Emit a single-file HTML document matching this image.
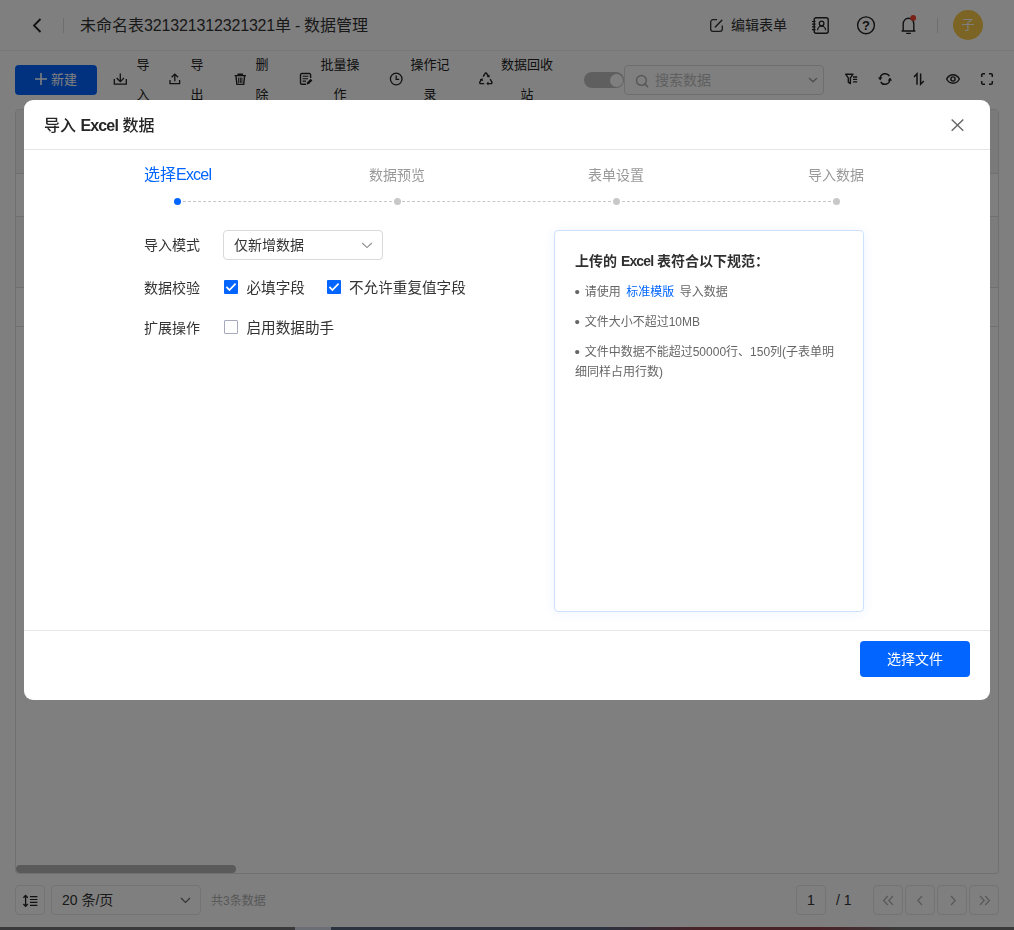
<!DOCTYPE html>
<html lang="zh-CN">
<head>
<meta charset="utf-8">
<title>数据管理</title>
<style>
*{box-sizing:border-box;margin:0;padding:0}
html,body{width:1014px;height:930px;overflow:hidden;background:#fff}
body{font-family:"Liberation Sans","Noto Sans CJK SC",sans-serif;font-size:14px;color:#333;position:relative}
.abs{position:absolute}
svg{display:block}
#page{position:absolute;left:0;top:0;width:1014px;height:930px;background:#fff}
#topbar{position:absolute;left:0;top:0;width:1014px;height:51px;border-bottom:1px solid #efefef}
#title{position:absolute;left:80px;top:0;height:51px;line-height:51px;font-size:16px;color:#333;white-space:nowrap;word-spacing:-0.6px}
.vdiv{position:absolute;width:1px;background:#ddd}
.tb{position:absolute;top:50px;height:60px;text-align:center;line-height:30px;font-size:13px;color:#222}
.tb span{display:block}
#newbtn{position:absolute;left:15px;top:65px;width:82px;height:30px;border-radius:4px;background:#0265ff;color:#fff;font-size:14px;line-height:30px;white-space:nowrap}
#table{position:absolute;left:15px;top:109px;width:984px;height:765px;border:1px solid #e0e0e0;border-radius:4px;overflow:hidden;background:#fff}
.row{position:absolute;left:0;width:984px;border-bottom:1px solid #e0e0e0}
#overlay{position:absolute;left:0;top:0;width:1014px;height:927px;background:rgba(0,0,0,.5)}
#strip{position:absolute;left:0;top:927px;width:1014px;height:3px;background:linear-gradient(to right,#3a3a3c 0,#3a3a3c 295px,#6b6f75 295px,#6b6f75 331px,#2b3340 331px,#2b3340 600px,#4a2328 700px,#4a2328 820px,#3a3a3a 900px,#3a3a3a 1014px)}
#modal{position:absolute;left:24px;top:100px;width:966px;height:600px;background:#fff;border-radius:9px;will-change:transform}
#mhead{position:absolute;left:0;top:0;width:966px;height:50px;border-bottom:1px solid #e6e6e6}
#mtitle{position:absolute;left:20px;top:0;line-height:51px;font-size:16px;font-weight:500;color:#262626;white-space:nowrap}
.step{position:absolute;top:64px;height:22px;line-height:22px;font-size:14px;color:#999;white-space:nowrap}
.dot{position:absolute;top:98px;width:7px;height:7px;border-radius:50%;background:#c8c8c8}
.lab{position:absolute;left:120px;font-size:14px;color:#333;line-height:20px;white-space:nowrap}
.cb{position:absolute;width:14px;height:14px;border-radius:1px}
.cb.on{background:#0265ff}
.cb.off{border:1.2px solid #a6aabb;background:#fff}
.cbl{position:absolute;font-size:14.6px;color:#333;line-height:20px;white-space:nowrap}
#panel{position:absolute;left:530px;top:130px;width:310px;height:382px;border:1px solid #cce0ff;border-radius:4px;box-shadow:0 1px 12px rgba(2,101,255,.07)}
#panel p{position:absolute;left:20px;font-size:12px;color:#666;line-height:20px;width:270px}
#panel p i{display:inline-block;width:9.7px;font-style:normal;font-size:15.5px;line-height:0;vertical-align:-1px;text-indent:-0.5px}
#mfoot{position:absolute;left:0;top:530px;width:966px;height:70px;border-top:1px solid #e6e6e6}
#okbtn{position:absolute;left:836px;top:541px;width:110px;height:36px;border-radius:4px;background:#0265ff;color:#fff;text-align:center;line-height:36px;font-size:14px}
.pgb{position:absolute;top:885px;height:30px;border:1px solid #e6e6e6;border-radius:4px;background:#fff}
</style>
</head>
<body>
<div id="page">
  <div id="topbar">
    <svg class="abs" style="left:30px;top:17px" width="14" height="17" viewBox="0 0 14 17"><path d="M10.5 2 L4 8.5 L10.5 15" fill="none" stroke="#222" stroke-width="1.8"/></svg>
    <div class="vdiv" style="left:63px;top:18px;height:15px"></div>
    <div id="title">未命名表<span style="letter-spacing:-0.16px">321321312321321</span>单 - 数据管理</div>
    <div class="abs" style="left:731px;top:0;line-height:51px;font-size:14px;color:#333;white-space:nowrap">编辑表单</div>

    <svg class="abs" style="left:709px;top:18px" width="16" height="15" viewBox="0 0 16 15"><path d="M8 1.7 H4 a2.3 2.3 0 0 0 -2.3 2.3 V11 a2.3 2.3 0 0 0 2.3 2.3 H11 a2.3 2.3 0 0 0 2.3 -2.3 V7.5" fill="none" stroke="#333" stroke-width="1.3"/><path d="M6.3 9 L12.8 2.3" fill="none" stroke="#333" stroke-width="1.5" stroke-linecap="round"/></svg>
    <svg class="abs" style="left:811px;top:16px" width="19" height="19" viewBox="0 0 19 19"><rect x="3.2" y="1.7" width="14" height="15.6" rx="2" fill="none" stroke="#222" stroke-width="1.4"/><path d="M1 5.5 H4.6 M1 8.2 H4.6 M1 10.9 H4.6 M1 13.6 H4.6" stroke="#222" stroke-width="1.2"/><circle cx="10.6" cy="7.4" r="2.3" fill="none" stroke="#222" stroke-width="1.3"/><path d="M6.6 14.2 a4 4 0 0 1 8 0" fill="none" stroke="#222" stroke-width="1.3"/></svg>
    <svg class="abs" style="left:856px;top:15px" width="20" height="20" viewBox="0 0 20 20"><circle cx="10" cy="10.3" r="8.4" fill="none" stroke="#222" stroke-width="1.4"/><text x="10" y="15" text-anchor="middle" font-family="Liberation Sans, sans-serif" font-size="13" font-weight="bold" fill="#222">?</text></svg>
    <svg class="abs" style="left:898px;top:13px" width="22" height="23" viewBox="0 0 22 23"><path d="M3.6 18 H17.4 M5.2 18 V11 a5.3 5.8 0 0 1 10.6 0 V18" fill="none" stroke="#222" stroke-width="1.4" stroke-linejoin="round"/><path d="M8.6 20.3 H12.4" stroke="#222" stroke-width="1.3" stroke-linecap="round"/><circle cx="15.2" cy="5" r="2.9" fill="#f5452e"/></svg>
    <div class="vdiv" style="left:937px;top:18px;height:15px"></div>
    <div class="abs" style="left:953px;top:10px;width:30px;height:30px;border-radius:50%;background:#f8c848;color:#fff;font-size:13px;line-height:30px;text-align:center">子</div>
  </div>
  <div id="newbtn"><svg class="abs" style="left:19px;top:7px" width="14" height="14" viewBox="0 0 14 14"><path d="M7 1 V13 M1 7 H13" stroke="#fff" stroke-width="1.6"/></svg><span class="abs" style="left:36px;top:0;font-size:13px">新建</span></div>
  <div class="tb" style="left:133px;width:20px"><span>导</span><span>入</span></div>
  <div class="tb" style="left:187px;width:20px"><span>导</span><span>出</span></div>
  <div class="tb" style="left:252px;width:20px"><span>删</span><span>除</span></div>
  <div class="tb" style="left:315px;width:50px"><span>批量操</span><span>作</span></div>
  <div class="tb" style="left:405px;width:50px"><span>操作记</span><span>录</span></div>
  <div class="tb" style="left:495px;width:64px"><span>数据回收</span><span>站</span></div>

  <svg class="abs" style="left:112px;top:72px" width="16" height="14" viewBox="0 0 16 14"><path d="M2.3 7 V12.2 H14.3 V7" fill="none" stroke="#222" stroke-width="1.3"/><path d="M8.3 1.6 V9.6 M4.6 6 L8.3 9.7 L12 6" fill="none" stroke="#222" stroke-width="1.3"/></svg>
  <svg class="abs" style="left:168px;top:72px" width="14" height="14" viewBox="0 0 14 14"><path d="M2 8 V11.6 H11.6 V8" fill="none" stroke="#222" stroke-width="1.3"/><path d="M6.8 9.2 V2.4 M3.6 5.3 L6.8 2.1 L10 5.3" fill="none" stroke="#222" stroke-width="1.3"/></svg>
  <svg class="abs" style="left:233px;top:72px" width="14" height="14" viewBox="0 0 14 14"><path d="M1.6 3.6 H13 M5.2 3.4 V2.2 H9.4 V3.4" fill="none" stroke="#222" stroke-width="1.4"/><path d="M3 4.2 L3.9 12.4 H10.7 L11.6 4.2" fill="none" stroke="#222" stroke-width="1.4" stroke-linejoin="round"/><path d="M5.7 5.5 V11 M7.3 5.5 V11 M8.9 5.5 V11" stroke="#222" stroke-width="1"/></svg>
  <svg class="abs" style="left:298px;top:71px" width="16" height="16" viewBox="0 0 16 16"><path d="M12.6 7 V3.8 a1.3 1.3 0 0 0 -1.3 -1.3 H3.8 a1.3 1.3 0 0 0 -1.3 1.3 V12 a1.3 1.3 0 0 0 1.3 1.3 H8" fill="none" stroke="#222" stroke-width="1.4"/><path d="M4.6 5.3 H10.4 M4.6 7.7 H10 M4.6 10.1 H8" stroke="#222" stroke-width="1.1"/><path d="M8.6 13.6 L9.2 11.2 L12.6 7.8 L14.4 9.6 L11 13 Z" fill="#222"/></svg>
  <svg class="abs" style="left:388px;top:71px" width="16" height="16" viewBox="0 0 16 16"><circle cx="8.2" cy="8" r="5.8" fill="none" stroke="#222" stroke-width="1.3"/><path d="M8.2 4.6 V8.4 H11.2" fill="none" stroke="#222" stroke-width="1.3"/></svg>
  <svg class="abs" style="left:477px;top:71px" width="18" height="16" viewBox="0 0 18 16"><g fill="none" stroke="#222" stroke-width="1.4" stroke-linejoin="round"><path d="M6.2 5.6 L8 2.6 a1 1 0 0 1 1.8 0 L11.4 5.4"/><path d="M13.2 8.2 L14.8 11 a1 1 0 0 1 -.9 1.6 H10.6"/><path d="M7.2 12.6 H3.8 a1 1 0 0 1 -.9 -1.6 L4.6 8.2"/></g><path d="M9.6 5.8 L12.8 6.4 L12.2 3.4 Z M11.4 10.6 L9.4 12.6 L11.4 14.6 Z M2.6 8.6 L5.6 7.2 L6 10.2 Z" fill="#222"/></svg>
  <svg class="abs" style="left:844px;top:72px" width="15" height="14" viewBox="0 0 15 14"><path d="M1.6 2.2 H9 L6.4 5.8 V11.6 L4.3 10.2 V5.8 Z" fill="none" stroke="#222" stroke-width="1.4" stroke-linejoin="round"/><path d="M9 5 H13.2 M9 7.4 H13.2 M9 9.8 H13.2" stroke="#222" stroke-width="1.3"/></svg>
  <svg class="abs" style="left:877px;top:71px" width="16" height="16" viewBox="0 0 16 16"><g fill="none" stroke="#222" stroke-width="1.5"><path d="M3.2 7.2 A5 5 0 0 1 12.4 5"/><path d="M12.9 8.8 A5 5 0 0 1 3.7 11"/></g><path d="M1 6.6 L5.4 6.2 L3.2 9.6 Z M15.1 9.4 L10.7 9.8 L12.9 6.4 Z" fill="#222"/></svg>
  <svg class="abs" style="left:912px;top:72px" width="14" height="14" viewBox="0 0 14 14"><path d="M2 5 L5 1.8 V12.8 M8.6 1.4 V12.2 L11.8 9" fill="none" stroke="#222" stroke-width="1.5"/></svg>
  <svg class="abs" style="left:945px;top:72px" width="16" height="14" viewBox="0 0 16 14"><path d="M1.6 7 C3.4 3.8 5.6 2.8 8 2.8 C10.4 2.8 12.6 3.8 14.4 7 C12.6 10.2 10.4 11.2 8 11.2 C5.6 11.2 3.4 10.2 1.6 7 Z" fill="none" stroke="#222" stroke-width="1.4"/><circle cx="8" cy="7" r="2.1" fill="none" stroke="#222" stroke-width="1.4"/></svg>
  <svg class="abs" style="left:980px;top:72px" width="14" height="14" viewBox="0 0 14 14"><path d="M1.7 5 V3 a1.3 1.3 0 0 1 1.3 -1.3 H5 M9 1.7 H11 a1.3 1.3 0 0 1 1.3 1.3 V5 M12.3 9 V11 a1.3 1.3 0 0 1 -1.3 1.3 H9 M5 12.3 H3 a1.3 1.3 0 0 1 -1.3 -1.3 V9" fill="none" stroke="#222" stroke-width="1.5"/></svg>
  <div class="abs" style="left:584px;top:72px;width:40px;height:16px;border-radius:8px;background:#bfbfbf"><div class="abs" style="right:1.5px;top:1.5px;width:13px;height:13px;border-radius:50%;background:#fff"></div></div>
  <div class="abs" style="left:624px;top:65px;width:200px;height:30px;border:1px solid #dcdcdc;border-radius:4px"><svg class="abs" style="left:10px;top:8px" width="14" height="14" viewBox="0 0 14 14"><circle cx="6.4" cy="6.4" r="4.9" fill="none" stroke="#b0b0b0" stroke-width="1.5"/><path d="M9.9 9.9 L12.6 12.6" stroke="#b0b0b0" stroke-width="1.6" stroke-linecap="round"/></svg><span class="abs" style="left:30px;top:0;line-height:28px;font-size:14px;color:#c0c0c0;white-space:nowrap">搜索数据</span><svg class="abs" style="left:183px;top:11px" width="10" height="6" viewBox="0 0 10 6"><path d="M1 1 L5 4.8 L9 1" fill="none" stroke="#999" stroke-width="1.2"/></svg></div>
  <div id="table">
    <div class="row" style="top:0;height:64px;background:#f5f5f5"></div>
    <div class="row" style="top:64px;height:43px"></div>
    <div class="row" style="top:107px;height:71px;background:#f8f8f8"></div>
    <div class="row" style="top:178px;height:39px"></div>
    <div class="abs" style="left:0;top:755px;width:220px;height:8px;border-radius:4px;background:#b4b4b4"></div>
  </div>
  <div class="pgb" style="left:15px;width:30px"><svg class="abs" style="left:6px;top:8px" width="17" height="14" viewBox="0 0 17 14"><path d="M3.6 1.6 V12.2 M1.4 3.8 L3.6 1.4 L5.8 3.8 M1.4 10 L3.6 12.4 L5.8 10" fill="none" stroke="#222" stroke-width="1.3"/><path d="M8 2.6 H15.4 M8 5.5 H15.4 M8 8.4 H15.4 M8 11.3 H15.4" stroke="#222" stroke-width="1.2"/></svg></div>
  <div class="pgb" style="left:51px;width:150px"><span class="abs" style="left:10px;top:0;line-height:28px;font-size:14px;color:#333;white-space:nowrap">20 条/页</span><svg class="abs" style="left:128px;top:11px" width="11" height="7" viewBox="0 0 11 7"><path d="M1 1 L5.5 5.4 L10 1" fill="none" stroke="#666" stroke-width="1.2"/></svg></div>
  <div class="abs" style="left:211px;top:886px;line-height:30px;font-size:12px;color:#b0b0b0;white-space:nowrap">共3条数据</div>
  <div class="pgb" style="left:796px;width:30px;text-align:center;line-height:28px;font-size:14px;color:#333">1</div>
  <div class="abs" style="left:836px;top:885px;line-height:30px;font-size:14px;color:#333;white-space:nowrap">/ 1</div>
  <div class="pgb" style="left:873px;width:30px"><svg class="abs" style="left:8px;top:9px" width="13" height="11" viewBox="0 0 13 11"><path d="M5.8 1 L1.6 5.5 L5.8 10 M11 1 L6.8 5.5 L11 10" fill="none" stroke="#b0b0b0" stroke-width="1.2"/></svg></div>
  <div class="pgb" style="left:905px;width:30px"><svg class="abs" style="left:10px;top:9px" width="8" height="11" viewBox="0 0 8 11"><path d="M6 1 L1.8 5.5 L6 10" fill="none" stroke="#b0b0b0" stroke-width="1.2"/></svg></div>
  <div class="pgb" style="left:937px;width:30px"><svg class="abs" style="left:11px;top:9px" width="8" height="11" viewBox="0 0 8 11"><path d="M2 1 L6.2 5.5 L2 10" fill="none" stroke="#b0b0b0" stroke-width="1.2"/></svg></div>
  <div class="pgb" style="left:969px;width:30px"><svg class="abs" style="left:8px;top:9px" width="13" height="11" viewBox="0 0 13 11"><path d="M2 1 L6.2 5.5 L2 10 M7.2 1 L11.4 5.5 L7.2 10" fill="none" stroke="#b0b0b0" stroke-width="1.2"/></svg></div>
</div>
<div id="overlay"></div>
<div id="strip"></div>
<div id="modal">
  <div id="mhead"><div id="mtitle">导入 <span style="letter-spacing:-0.85px;font-weight:bold">Excel</span> 数据</div>
    <svg class="abs" style="left:926px;top:18px" width="15" height="14" viewBox="0 0 15 14"><path d="M1.7 1.4 L13.3 12.8 M13.3 1.4 L1.7 12.8" fill="none" stroke="#666" stroke-width="1.4"/></svg>
  </div>
  <div class="step" style="left:120px;color:#0265ff;font-size:16px">选择<span style="letter-spacing:-0.8px">Excel</span></div>
  <div class="step" style="left:345px">数据预览</div>
  <div class="step" style="left:564px">表单设置</div>
  <div class="step" style="left:784px">导入数据</div>
  <svg class="abs" style="left:153px;top:101px" width="660" height="1" viewBox="0 0 660 1"><path d="M6 .5 H215 M225 .5 H434 M445 .5 H654" stroke="#c8c8c8" stroke-width="1" stroke-dasharray="3 2.0245"/></svg>
  <div class="dot" style="left:150px;background:#0265ff"></div>
  <div class="dot" style="left:369.5px"></div>
  <div class="dot" style="left:589px"></div>
  <div class="dot" style="left:808.5px"></div>

  <div class="lab" style="top:135px">导入模式</div>
  <div class="abs" style="left:199px;top:130px;width:160px;height:30px;border:1px solid #d9d9d9;border-radius:4px"><span class="abs" style="left:10px;top:0;line-height:28px;font-size:14px;color:#333;white-space:nowrap">仅新增数据</span><svg class="abs" style="left:137px;top:11px" width="12" height="7" viewBox="0 0 12 7"><path d="M1.2 1 L6 5.6 L10.8 1" fill="none" stroke="#8c8c8c" stroke-width="1.1"/></svg></div>
  <div class="lab" style="top:177.5px">数据校验</div>
  <div class="cb on" style="left:200px;top:180px"><svg width="14" height="14" viewBox="0 0 14 14"><path d="M2.4 6.8 L5.4 10 L11.6 3.7" fill="none" stroke="#fff" stroke-width="1.7"/></svg></div>
  <div class="cbl" style="left:222.5px;top:177.5px">必填字段</div>
  <div class="cb on" style="left:302.5px;top:180px"><svg width="14" height="14" viewBox="0 0 14 14"><path d="M2.4 6.8 L5.4 10 L11.6 3.7" fill="none" stroke="#fff" stroke-width="1.7"/></svg></div>
  <div class="cbl" style="left:325px;top:177.5px">不允许重复值字段</div>
  <div class="lab" style="top:217.5px">扩展操作</div>
  <div class="cb off" style="left:200px;top:220px"></div>
  <div class="cbl" style="left:222.5px;top:217.5px">启用数据助手</div>

  <div id="panel">
    <div class="abs" style="left:20px;top:20px;line-height:20px;font-size:14px;font-weight:bold;color:#303030;white-space:nowrap">上传的 <span style="letter-spacing:-0.85px;font-weight:bold">Excel</span> 表符合以下规范：</div>
    <p style="top:51px"><i>•</i>请使用<span style="color:#0265ff;margin:0 5.5px">标准模版</span>导入数据</p>
    <p style="top:81px"><i>•</i>文件大小不超过10MB</p>
    <p style="top:111px"><i>•</i>文件中数据不能超过50000行、150列(子表单明细同样占用行数)</p>
  </div>
  <div id="mfoot"></div>
  <div id="okbtn">选择文件</div>
</div>
</body>
</html>
